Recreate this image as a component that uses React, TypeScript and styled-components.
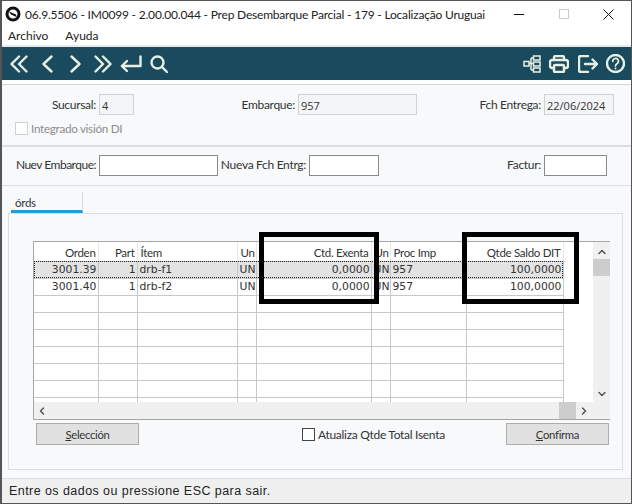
import React from "react";
import styled, { createGlobalStyle } from "styled-components";
import { ChevronUp, ChevronDown, ChevronLeft, ChevronRight } from "lucide-react";

const Global = createGlobalStyle`
  html, body { margin: 0; padding: 0; background: #fff; }
  * { box-sizing: border-box; }
  body { font-family: "Lato", "Open Sans", sans-serif; font-size: 12px; letter-spacing: -0.3px; color: #333; }
`;

const Win = styled.div`
  width: 632px; height: 504px; display: flex; flex-direction: column;
  border: 1px solid #555; border-left-width: 2px; overflow: hidden; background: #f7f9fb;
`;
const TitleBar = styled.div`
  height: 27px; flex: none; background: #fff; display: flex; align-items: center; padding: 0 0 1px 3px;
`;
const LogoMark = styled.svg`
  flex: none; display: block;
`;
const TitleText = styled.div`
  margin-left: 4px; font-size: 12px; color: #222; white-space: nowrap; flex: 1; min-width: 0; letter-spacing: -0.2px;
`;
const WinControls = styled.div`
  display: flex; align-items: center; color: #111; flex: none;
`;
const ControlSlot = styled.span`
  width: 45px; display: flex; justify-content: center; align-items: center;
`;
const MaxBox = styled.div`
  width: 10px; height: 10px; border: 1px solid #ccc;
`;
const MenuBar = styled.div`
  height: 17px; flex: none; background: #fff; display: flex; gap: 17px; padding: 0 0 2px 6px; align-items: center; font-size: 12px; color: #222; letter-spacing: 0;
`;
const ToolSeam = styled.div`
  height: 2px; flex: none; background: #e6eaec;
`;
const Toolbar = styled.div`
  height: 33px; flex: none; background: #1a4a5e; display: flex; align-items: center; justify-content: space-between; color: #e8f0e4;
`;
const ToolGroup = styled.div`
  display: flex; align-items: center;
`;
const ToolSlot = styled.span<{ $w: number }>`
  width: ${p => p.$w}px; display: flex; justify-content: center; align-items: center;
`;
const ToolGap = styled.div`
  flex: none; background: #fff; border-bottom: 1px solid #d3d6d8; height: 5px;
`;
const FormTop = styled.div`
  height: 62px; flex: none; padding-top: 9px; border-bottom: 2px solid #dcdedf;
`;
const FormBottom = styled.div`
  height: 39px; flex: none; display: flex; align-items: flex-start; padding-top: 8px; border-bottom: 1px solid #dcdedf;
`;
const Row = styled.div`
  display: flex; align-items: center;
`;
const Label = styled.label<{ $w: number; $tight?: boolean }>`
  width: ${p => p.$w}px; text-align: right; padding-right: 3px; color: #333; white-space: nowrap; flex: none; line-height: 20px;
  letter-spacing: ${p => (p.$tight ? "-0.5px" : "inherit")};
`;
const Input = styled.div<{ $w: number; $ro?: boolean }>`
  width: ${p => p.$w}px; height: 21px; flex: none; padding: 2px 0 0 2px; line-height: 17px; color: #333;
  font-family: "Open Sans", sans-serif; font-size: 11px; letter-spacing: 0;
  background: ${p => (p.$ro ? "#f3f5f6" : "#fff")};
  border: 1px solid ${p => (p.$ro ? "#cfd2d4" : "#8a8a8a")};
`;
const CheckRow = styled.div`
  display: flex; align-items: center; margin: 6px 0 0 13px; color: #8d8d8d; gap: 3px; font-size: 11.7px;
`;
const CheckBox = styled.span<{ $on?: boolean }>`
  width: 13px; height: 13px; display: inline-block; flex: none; background: #fff;
  border: 1px solid ${p => (p.$on ? "#444" : "#d0d0d0")};
`;
const TabArea = styled.div`
  flex: 1; padding: 6px 8px 8px 6px; display: flex; flex-direction: column;
`;
const TabStrip = styled.div`
  display: flex; height: 21px; flex: none;
`;
const Tab = styled.div`
  width: 72px; margin-left: 3px; padding: 4px 0 0 4px; border-bottom: 3px solid #19a0d8; border-right: 1px solid #d6d8da; color: #333; font-size: 11.5px; line-height: 14px;
`;
const TabPanel = styled.div`
  position: relative; flex: 1; border: 1px solid #dcdedf; padding: 27px 13px 0 24px;
`;
const GridFrame = styled.div`
  width: 577px; height: 179px; border: 1px solid #a6a6a6; background: #fff; display: grid; grid-template-columns: 559px 17px; grid-template-rows: 160px 17px;
`;
const GridViewport = styled.div`
  overflow: hidden; background: #fff;
`;
const Table = styled.table`
  border-collapse: collapse; table-layout: fixed; width: 529px; color: #333;
`;
const Th = styled.th<{ $r?: boolean }>`
  height: 19px; padding: 2px 2px 0 3px; font-weight: 400; text-align: ${p => (p.$r ? "right" : "left")}; border-right: 1px solid #e8e8e8; border-bottom: 1px solid #c8c8c8; white-space: nowrap; overflow: hidden; font-size: 11.5px;
`;
const Tr = styled.tr<{ $sel?: boolean }>`
  background: ${p => (p.$sel ? "#e3e3e3" : "#fff")};
  outline: ${p => (p.$sel ? "1px dotted #222" : "none")}; outline-offset: -1px;
`;
const Td = styled.td<{ $r?: boolean }>`
  height: 17px; padding: 0 1px 0 2px; text-align: ${p => (p.$r ? "right" : "left")}; border-right: 1px solid #c8c8c8; border-bottom: 1px solid #c8c8c8; white-space: nowrap; overflow: hidden; font-family: "DejaVu Sans", sans-serif; font-size: 10.8px; line-height: 15px; letter-spacing: 0;
`;
const VScroll = styled.div`
  background: #f0f0f0; display: flex; flex-direction: column; align-items: center; padding: 4px 0 2px; color: #555;
`;
const VThumb = styled.div`
  width: 100%; height: 17px; background: #cdcdcd; margin: 1px 0 auto;
`;
const HScroll = styled.div`
  grid-column: 1 / span 2; background: #f0f0f0; display: flex; align-items: center; color: #555; padding: 0 20px 0 2px;
`;
const HThumb = styled.div`
  width: 17px; height: 100%; background: #cdcdcd; margin-left: auto; margin-right: 2px;
`;
const Actions = styled.div`
  display: flex; align-items: center; width: 573px; margin-left: 3px; margin-top: 3px; height: 22px;
`;
const Btn = styled.button`
  width: 103px; height: 22px; padding: 0; background: #e1e1e1; border: 1px solid #adadad; font-family: inherit; font-size: 11.3px; letter-spacing: inherit; color: #333;
`;
const CheckLabel = styled.div`
  display: flex; align-items: center; gap: 3px; margin-left: 163px; margin-right: auto; color: #333;
`;
const Highlight = styled.div<{ $l: number; $w: number }>`
  position: absolute; left: ${p => p.$l}px; top: 18px; width: ${p => p.$w}px; height: 72px; border: 5px solid #000; pointer-events: none;
`;
const Status = styled.div`
  height: 25px; flex: none; background: #f0f0f0; border-top: 1px solid #dcdedf; padding-left: 7px; display: flex; align-items: center;
  font-family: "Liberation Sans", Arial, sans-serif; font-size: 12.5px; letter-spacing: 0.035em; color: #222;
`;

const Logo = () => (
  <LogoMark width="16" height="16" viewBox="0 0 16 16">
    <circle cx="8" cy="8" r="6" fill="none" stroke="#111" strokeWidth="3" />
    <path d="M4 5.500 L11 8.500 L11.500 11 L6 8.500Z" fill="#111" />
  </LogoMark>
);
const Ico = styled.svg`
  fill: none; stroke: currentColor; stroke-width: 2.4; stroke-linecap: round; stroke-linejoin: round; display: block;
`;
const DoubleLeft = () => (
  <Ico width="18" height="18" viewBox="0 0 18 18"><path d="M9 1.500 1.500 9 9 16.500M16.500 1.500 9 9l7.500 7.500" /></Ico>
);
const DoubleRight = () => (
  <Ico width="18" height="18" viewBox="0 0 18 18"><path d="M1.500 1.500 9 9l-7.500 7.500M9 1.500 16.500 9 9 16.500" /></Ico>
);
const SingleLeft = () => (
  <Ico width="11" height="18" viewBox="0 0 11 18"><path d="M9.500 1.500 1.500 9l8 7.500" /></Ico>
);
const SingleRight = () => (
  <Ico width="11" height="18" viewBox="0 0 11 18"><path d="M1.500 1.500 9.500 9l-8 7.500" /></Ico>
);
const Enter = () => (
  <Ico width="22" height="18" viewBox="0 0 22 18"><path d="M20.500 1.500V11H2M7 6l-5.200 5L7 16" /></Ico>
);
const Magnifier = () => (
  <Ico width="18" height="18" viewBox="0 0 18 18" strokeWidth="1.8"><circle cx="7.500" cy="7.500" r="6" /><path d="m12 12 5 5" /></Ico>
);
const TreeIcon = () => (
  <svg width="18" height="18" viewBox="0 0 18 18" fill="none" stroke="currentColor" strokeWidth="1.5">
    <rect x="1" y="6.500" width="5" height="4.500" />
    <rect x="10.500" y="1" width="6.500" height="4" />
    <rect x="10.500" y="7" width="6.500" height="4" />
    <rect x="10.500" y="13" width="6.500" height="4" />
    <path d="M6 8.500h4.500M8 3v12M8 3h2.500M8 15h2.500" />
  </svg>
);
const PrinterIcon = () => (
  <Ico width="20" height="18" viewBox="0 0 20 18" strokeWidth="2">
    <path d="M5 5V2.500C5 1.700 5.700 1 6.500 1h7c.8 0 1.500.7 1.500 1.500V5" />
    <path d="M5 13H3a2 2 0 0 1-2-2V7a2 2 0 0 1 2-2h14a2 2 0 0 1 2 2v4a2 2 0 0 1-2 2h-2" />
    <rect x="5" y="10" width="10" height="7" rx="1" />
  </Ico>
);
const ExitIcon = () => (
  <Ico width="20" height="18" viewBox="0 0 20 18" strokeWidth="2">
    <path d="M10 1H3a2 2 0 0 0-2 2v12a2 2 0 0 0 2 2h7M7 9h12M14.500 4.500 19 9l-4.500 4.500" />
  </Ico>
);
const HelpIcon = () => (
  <Ico width="19" height="19" viewBox="0 0 19 19" strokeWidth="1.5">
    <circle cx="9.500" cy="9.500" r="8.500" />
    <path d="M6.800 7.300a2.800 2.800 0 1 1 4.200 2.400c-1 .6-1.500 1.200-1.500 2.300" strokeWidth="1.700" />
    <path d="M9.500 14.500v.1" strokeWidth="2" />
  </Ico>
);
const MinGlyph = () => (
  <svg width="10" height="10" viewBox="0 0 10 10" stroke="currentColor"><path d="M0 5.500h10" /></svg>
);
const CloseGlyph = () => (
  <svg width="11" height="11" viewBox="0 0 11 11" stroke="currentColor" strokeWidth="1"><path d="M.5.500l10 10M10.500.500l-10 10" /></svg>
);

const rows = [
  { o: "3001.39", p: "1", i: "drb-f1", u: "UN", c: "0,0000", n: "UN", m: "957", q: "100,0000", sel: true },
  { o: "3001.40", p: "1", i: "drb-f2", u: "UN", c: "0,0000", n: "UN", m: "957", q: "100,0000" },
];
const widths = [64, 39, 100, 19, 115, 19, 76, 97];

export default function App() {
  return (
    <>
      <Global />
      <Win>
        <TitleBar>
          <Logo />
          <TitleText>06.9.5506 - IM0099 - 2.00.00.044 - Prep Desembarque Parcial - 179 - Localização Uruguai</TitleText>
          <WinControls>
            <ControlSlot><MinGlyph /></ControlSlot>
            <ControlSlot><MaxBox /></ControlSlot>
            <ControlSlot><CloseGlyph /></ControlSlot>
          </WinControls>
        </TitleBar>
        <MenuBar>
          <span>Archivo</span>
          <span>Ayuda</span>
        </MenuBar>
        <ToolSeam />
        <Toolbar>
          <ToolGroup>
            <ToolSlot $w={33}><DoubleLeft /></ToolSlot>
            <ToolSlot $w={24}><SingleLeft /></ToolSlot>
            <ToolSlot $w={33}><SingleRight /></ToolSlot>
            <ToolSlot $w={21}><DoubleRight /></ToolSlot>
            <ToolSlot $w={35}><Enter /></ToolSlot>
            <ToolSlot $w={21}><Magnifier /></ToolSlot>
          </ToolGroup>
          <ToolGroup>
            <ToolSlot $w={19}><TreeIcon /></ToolSlot>
            <ToolSlot $w={35}><PrinterIcon /></ToolSlot>
            <ToolSlot $w={23}><ExitIcon /></ToolSlot>
            <ToolSlot $w={32}><HelpIcon /></ToolSlot>
          </ToolGroup>
        </Toolbar>
        <ToolGap />
        <FormTop>
          <Row>
            <Label $w={97}>Sucursal:</Label>
            <Input $w={35} $ro>4</Input>
            <Label $w={164}>Embarque:</Label>
            <Input $w={119} $ro>957</Input>
            <Label $w={127}>Fch Entrega:</Label>
            <Input $w={70} $ro>22/06/2024</Input>
          </Row>
          <CheckRow>
            <CheckBox />
            <span>Integrado visión DI</span>
          </CheckRow>
        </FormTop>
        <FormBottom>
          <Label $w={97} $tight>Nuev Embarque:</Label>
          <Input $w={119} />
          <Label $w={91}>Nueva Fch Entrg:</Label>
          <Input $w={70} />
          <Label $w={165}>Factur:</Label>
          <Input $w={63} />
        </FormBottom>
        <TabArea>
          <TabStrip><Tab>órds</Tab></TabStrip>
          <TabPanel>
            <GridFrame>
              <GridViewport>
                <Table>
                  <colgroup>
                    {widths.map((w, i) => <col key={i} style={{ width: w }} />)}
                  </colgroup>
                  <thead>
                    <tr>
                      <Th $r>Orden</Th><Th $r>Part</Th><Th>Ítem</Th><Th>Un</Th><Th $r>Ctd. Exenta</Th><Th>Un</Th><Th>Proc Imp</Th><Th $r>Qtde Saldo DIT</Th>
                    </tr>
                  </thead>
                  <tbody>
                    {rows.map(r => (
                      <Tr key={r.o} $sel={r.sel}>
                        <Td $r>{r.o}</Td><Td $r>{r.p}</Td><Td>{r.i}</Td><Td>{r.u}</Td><Td $r>{r.c}</Td><Td>{r.n}</Td><Td>{r.m}</Td><Td $r>{r.q}</Td>
                      </Tr>
                    ))}
                    {Array.from({ length: 7 }).map((_, k) => (
                      <Tr key={k}>{widths.map((_, i) => <Td key={i} />)}</Tr>
                    ))}
                  </tbody>
                </Table>
              </GridViewport>
              <VScroll>
                <ChevronUp size={12} strokeWidth={3} />
                <VThumb />
                <ChevronDown size={12} strokeWidth={3} />
              </VScroll>
              <HScroll>
                <ChevronLeft size={12} strokeWidth={3} />
                <HThumb />
                <ChevronRight size={12} strokeWidth={3} />
              </HScroll>
            </GridFrame>
            <Actions>
              <Btn><u>S</u>elección</Btn>
              <CheckLabel>
                <CheckBox $on />
                <span>Atualiza Qtde Total Isenta</span>
              </CheckLabel>
              <Btn><u>C</u>onfirma</Btn>
            </Actions>
            <Highlight $l={250} $w={120} />
            <Highlight $l={453} $w={117} />
          </TabPanel>
        </TabArea>
        <Status>Entre os dados ou pressione ESC para sair.</Status>
      </Win>
    </>
  );
}
